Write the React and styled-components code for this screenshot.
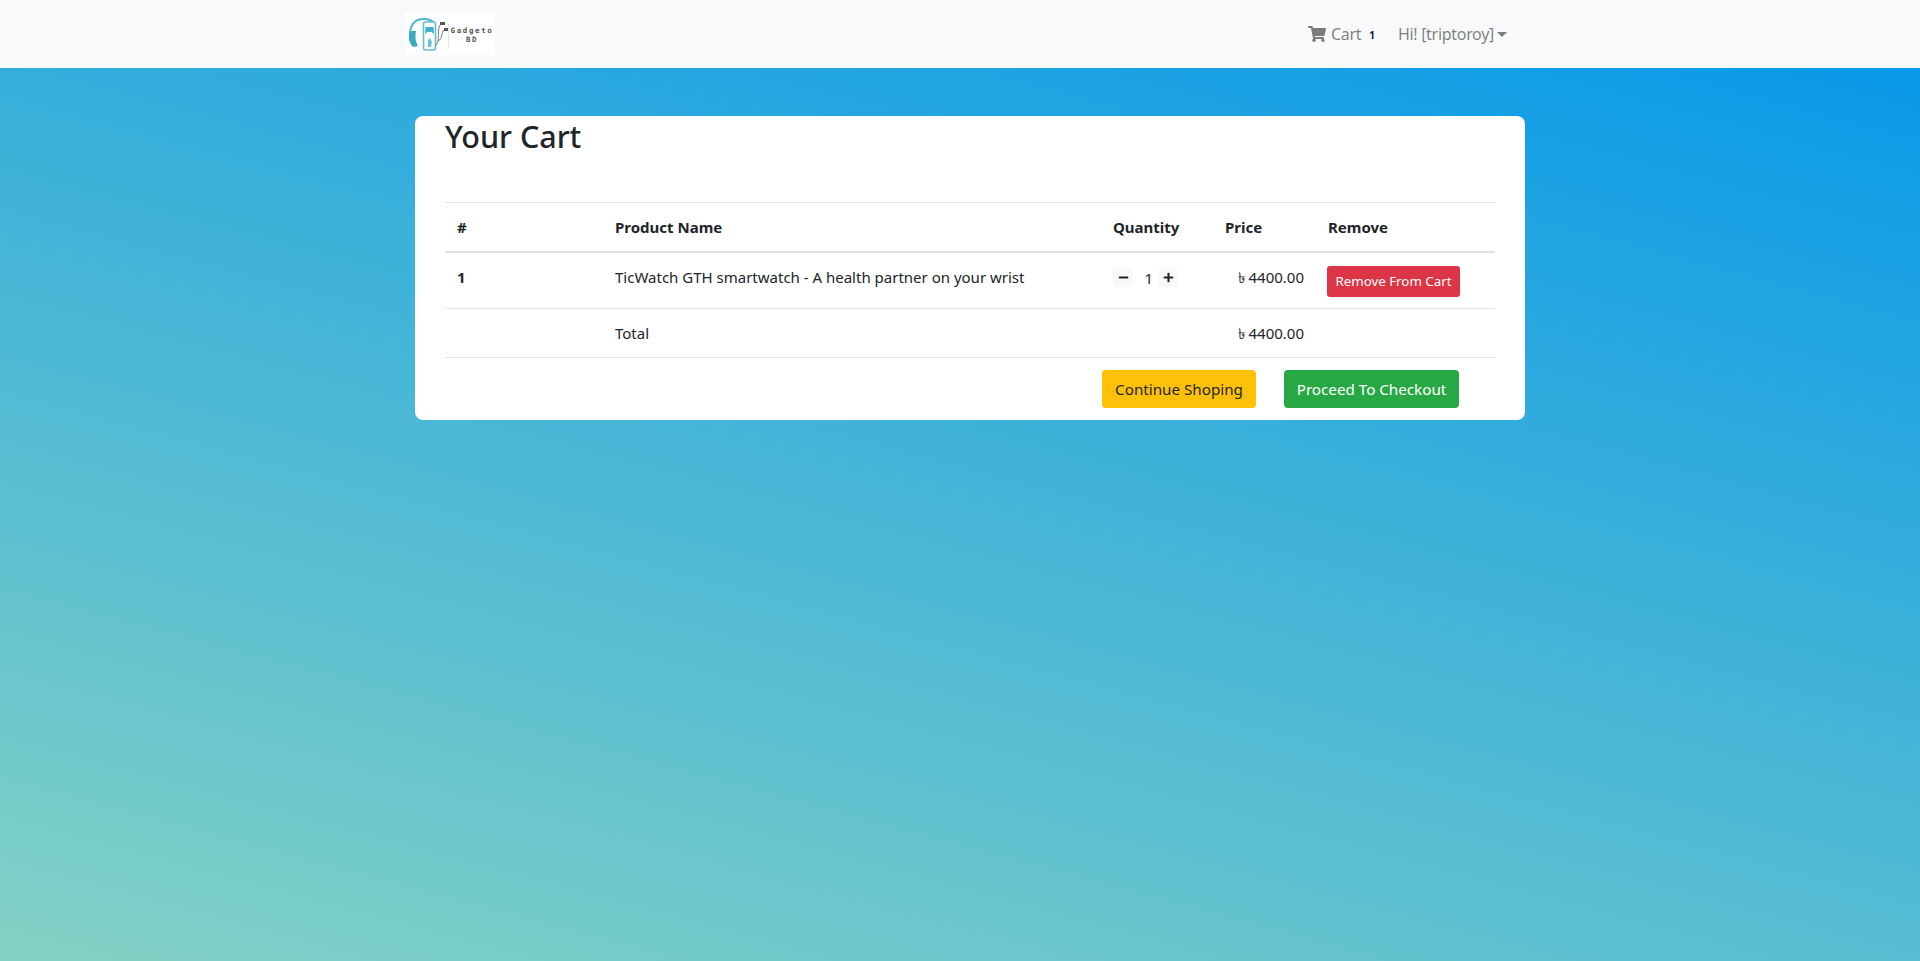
import React from "react";
import styled, { createGlobalStyle } from "styled-components";
import { FaShoppingCart, FaMinus, FaPlus } from "react-icons/fa";

const GlobalStyle = createGlobalStyle`
  * { box-sizing: border-box; }
  html, body { margin: 0; height: 100%; }
  body {
    font-family: "Noto Sans", "Open Sans", sans-serif;
    font-size: 16px;
    line-height: 1.5;
    color: #212529;
  }
`;

const Page = styled.div`
  min-height: 961px;
  background: linear-gradient(15deg, #84d2c5, #0396ea);
`;

const Navbar = styled.nav`
  height: 68px;
  background: #f8f9fa;
  padding: 0 405px;
  display: flex;
  align-items: center;
  justify-content: space-between;
`;

const LogoBox = styled.div`
  width: 90px;
  height: 42px;
  background: #fff;
  display: flex;
  align-items: center;
`;

const LogoText = styled.div`
  width: 44px;
  margin: 2px 0 0 1px;
  font-family: "DejaVu Sans Mono", monospace;
  font-size: 7.5px;
  font-weight: 700;
  line-height: 9px;
  letter-spacing: 1.6px;
  color: #555;
  text-align: center;
  white-space: nowrap;
`;

const NavItems = styled.div`
  display: flex;
  align-items: center;
  margin-right: 8px;
`;

const NavLink = styled.a`
  display: flex;
  align-items: center;
  color: rgba(0, 0, 0, 0.5);
  font-size: 16px;
  white-space: nowrap;
  letter-spacing: -0.3px;
`;

const CartIcon = styled(FaShoppingCart)`
  margin-right: 5px;
`;

const CartCount = styled.span`
  color: #14143c;
  font-size: 10px;
  font-weight: 700;
  margin: 2px 23px 0 8px;
`;

const Caret = styled.span`
  width: 0;
  height: 0;
  margin-left: 3px;
  border-top: 5px solid rgba(0, 0, 0, 0.5);
  border-left: 5px solid transparent;
  border-right: 5px solid transparent;
`;

const Card = styled.main`
  width: 1110px;
  height: 304px;
  margin: 48px 0 0 415px;
  padding: 0 30px;
  background: #fff;
  border-radius: 8px;
`;

const Title = styled.h1`
  margin: 0;
  height: 86px;
  font-size: 30.5px;
  font-weight: 500;
  line-height: 40px;
`;

const Table = styled.table`
  width: 1050px;
  table-layout: fixed;
  border-collapse: collapse;
  font-size: 15px;
`;

const Th = styled.th`
  height: 49px;
  padding: 0 12px;
  text-align: left;
  font-weight: 700;
  border-top: 1px solid #dee2e6;
  border-bottom: 2px solid #dee2e6;
`;

const Td = styled.td`
  height: ${(p) => p.$height}px;
  padding: 0 12px;
  font-weight: ${(p) => (p.$bold ? 700 : 400)};
  text-align: ${(p) => (p.$right ? "right" : "left")};
  border-bottom: 1px solid #dee2e6;
  white-space: nowrap;
`;

const TopCell = styled(Td)`
  vertical-align: top;
  padding-top: 13px;
`;

const Qty = styled.div`
  display: flex;
  align-items: center;
  margin-top: 1px;
`;

const QtyButton = styled.button`
  width: 20px;
  height: 19px;
  padding: 0;
  border: 0;
  border-radius: 4px;
  background: #f8f9fa;
  color: #212529;
  display: flex;
  align-items: center;
  justify-content: center;
  font-size: 11px;
`;

const QtyValue = styled.span`
  width: 25px;
  text-align: right;
  padding-right: 5px;
`;

const RemoveButton = styled.button`
  height: 31px;
  width: 133px;
  margin-left: -1px;
  padding: 2px 0 0;
  border: 0;
  border-radius: 3px;
  background: #dc3545;
  color: #fff;
  font: inherit;
  font-size: 13.3px;
  display: block;
`;

const Actions = styled.div`
  display: flex;
  padding: 12px 0 0 657px;
`;

const ActionButton = styled.button`
  height: 38px;
  padding: 0;
  width: ${(p) => p.$width}px;
  margin-right: ${(p) => p.$gap || 0}px;
  border: 0;
  border-radius: 4px;
  background: ${(p) => p.$bg};
  color: ${(p) => p.$color};
  font: inherit;
  font-size: 15.2px;
`;

export default function App() {
  return (
    <Page>
      <GlobalStyle />
      <Navbar>
        <LogoBox>
          <svg width="44" height="42" viewBox="0 0 44 42" fill="none">
            <path d="M7 30C2 18 7 6 18 6C23 6 27 7 29 10" stroke="#4cb6ca" strokeWidth="2" />
            <path d="M6 18C3 22 3 29 8 34L13 33C10 28 10 23 11 18Z" fill="#3aabc0" />
            <rect x="18.5" y="9" width="12" height="28" rx="2" fill="#fff" stroke="#62c0d2" strokeWidth="1.6" />
            <path d="M20.5 14H28.5L29 21L26.5 19H22.5L20 21Z" fill="#3fb0c6" />
            <path d="M23 27L25 25L27 29L26 34H23Z" fill="#6cc2d2" />
            <path d="M30 33C36 30 31 15 36 11" stroke="#777" strokeWidth="1" />
            <rect x="35" y="9" width="5" height="3" fill="#555" />
            <path d="M33 28C38 26 36 19 39 17" stroke="#777" strokeWidth="1" />
            <rect x="39" y="15" width="4" height="3" fill="#555" />
            <path d="M43.5 11V34" stroke="#d4ecf2" strokeWidth="1" />
          </svg>
          <LogoText>Gadgeto<br />BD</LogoText>
        </LogoBox>
        <NavItems>
          <NavLink>
            <CartIcon size={18} />
            Cart
          </NavLink>
          <CartCount>1</CartCount>
          <NavLink>
            Hi! [triptoroy]
            <Caret />
          </NavLink>
        </NavItems>
      </Navbar>
      <Card>
        <Title>Your Cart</Title>
        <Table>
          <colgroup>
            <col style={{ width: 158 }} />
            <col style={{ width: 498 }} />
            <col style={{ width: 112 }} />
            <col style={{ width: 103 }} />
            <col style={{ width: 179 }} />
          </colgroup>
          <thead>
            <tr>
              <Th>#</Th>
              <Th>Product Name</Th>
              <Th>Quantity</Th>
              <Th>Price</Th>
              <Th>Remove</Th>
            </tr>
          </thead>
          <tbody>
            <tr>
              <TopCell $height={57} $bold>1</TopCell>
              <TopCell $height={57}>TicWatch GTH smartwatch - A health partner on your wrist</TopCell>
              <TopCell $height={57}>
                <Qty>
                  <QtyButton><FaMinus /></QtyButton>
                  <QtyValue>1</QtyValue>
                  <QtyButton><FaPlus /></QtyButton>
                </Qty>
              </TopCell>
              <TopCell $height={57} $right>৳ 4400.00</TopCell>
              <TopCell $height={57}><RemoveButton>Remove From Cart</RemoveButton></TopCell>
            </tr>
            <tr>
              <Td $height={49} />
              <Td $height={49}>Total</Td>
              <Td $height={49} />
              <Td $height={49} $right>৳ 4400.00</Td>
              <Td $height={49} />
            </tr>
          </tbody>
        </Table>
        <Actions>
          <ActionButton $width={154} $gap={28} $bg="#ffc107" $color="#212529">Continue Shoping</ActionButton>
          <ActionButton $width={175} $bg="#28a745" $color="#fff">Proceed To Checkout</ActionButton>
        </Actions>
      </Card>
    </Page>
  );
}
